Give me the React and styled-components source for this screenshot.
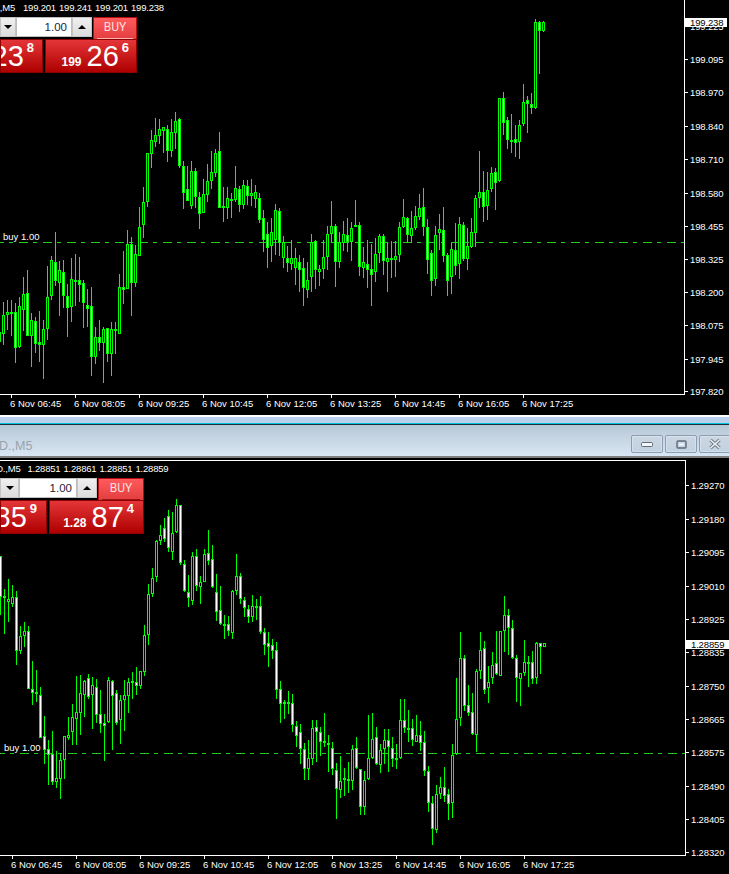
import React from 'react';
import styled, { createGlobalStyle } from 'styled-components';

const GlobalStyle = createGlobalStyle`
	html, body {
		margin: 0;
		padding: 0;
		background: #000;
	}
	#root {
		width: 729px;
		height: 874px;
		overflow: hidden;
	}
`;

const CHART_FONT = '"Liberation Sans", Arial, sans-serif';

// candles: [high, bodyTop, bodyBottom, low, filled] in page pixels, one every 4px
const usdJpyCandles = [
	[310, 332, 342, 350, 1], [302, 315, 334, 345, 0], [300, 312, 315, 330, 0], [300, 312, 314, 336, 0], [303, 312, 348, 363, 1],
	[297, 306, 347, 348, 0], [277, 294, 310, 331, 0], [270, 293, 336, 336, 1], [313, 320, 336, 367, 0], [317, 321, 344, 353, 1],
	[311, 342, 345, 362, 1], [320, 329, 345, 379, 0], [266, 297, 329, 340, 0], [256, 260, 296, 300, 0], [232, 262, 281, 286, 1],
	[261, 270, 283, 316, 0], [260, 272, 296, 308, 1], [284, 296, 308, 337, 1], [258, 279, 307, 322, 0], [254, 280, 281, 306, 0],
	[257, 280, 285, 302, 1], [280, 283, 303, 328, 1], [289, 305, 309, 327, 1], [287, 306, 357, 376, 1], [327, 337, 357, 364, 0],
	[320, 337, 343, 351, 1], [327, 329, 343, 383, 0], [328, 328, 354, 362, 1], [322, 329, 354, 376, 0], [322, 329, 331, 354, 1],
	[274, 287, 334, 334, 0], [251, 287, 290, 304, 1], [230, 244, 289, 289, 0], [237, 244, 283, 316, 1], [245, 254, 283, 287, 0],
	[207, 227, 256, 256, 0], [187, 202, 225, 238, 0], [153, 153, 202, 207, 0], [130, 140, 154, 168, 0], [118, 135, 142, 147, 0],
	[119, 129, 136, 144, 0], [127, 127, 131, 153, 0], [125, 129, 151, 162, 1], [119, 132, 151, 157, 0], [112, 121, 133, 149, 0],
	[118, 119, 166, 168, 1], [161, 166, 193, 209, 1], [166, 189, 201, 201, 1], [161, 171, 206, 209, 0], [168, 171, 197, 208, 1],
	[192, 197, 214, 229, 1], [179, 194, 213, 213, 0], [164, 181, 195, 202, 0], [151, 172, 181, 189, 0], [149, 153, 173, 177, 0],
	[132, 151, 208, 208, 1], [187, 206, 208, 222, 0], [187, 198, 208, 219, 0], [193, 199, 201, 218, 0], [166, 188, 200, 202, 0],
	[186, 189, 205, 212, 1], [180, 185, 205, 209, 0], [180, 186, 196, 205, 1], [179, 193, 196, 206, 0], [185, 192, 199, 208, 0],
	[193, 198, 220, 223, 1], [210, 218, 240, 252, 1], [222, 234, 248, 268, 1], [218, 232, 246, 262, 0], [204, 210, 240, 255, 0],
	[208, 211, 243, 256, 1], [236, 242, 258, 268, 0], [246, 258, 263, 272, 1], [240, 258, 264, 270, 0], [248, 258, 268, 285, 0],
	[255, 262, 270, 292, 1], [258, 268, 288, 306, 1], [262, 280, 290, 298, 0], [234, 242, 277, 292, 0], [240, 241, 270, 289, 1],
	[265, 269, 272, 286, 0], [240, 257, 269, 279, 0], [226, 234, 257, 270, 0], [201, 226, 234, 242, 0], [224, 226, 262, 287, 1],
	[232, 242, 262, 268, 0], [221, 234, 243, 251, 0], [218, 235, 242, 252, 1], [222, 228, 242, 261, 0], [200, 225, 226, 226, 0],
	[222, 225, 267, 276, 1], [247, 262, 268, 278, 0], [240, 264, 270, 288, 1], [244, 269, 275, 306, 1], [238, 254, 272, 282, 0],
	[234, 236, 253, 263, 0], [234, 236, 261, 275, 1], [242, 258, 262, 292, 0], [241, 258, 259, 278, 0], [241, 256, 260, 277, 0],
	[222, 227, 255, 262, 0], [199, 217, 227, 228, 0], [217, 218, 235, 243, 1], [211, 228, 236, 243, 0], [206, 216, 228, 230, 0],
	[194, 208, 217, 220, 0], [188, 207, 227, 236, 1], [219, 227, 260, 274, 1], [250, 253, 281, 296, 1], [226, 235, 279, 286, 0],
	[214, 229, 233, 250, 0], [207, 230, 256, 262, 1], [253, 255, 281, 296, 1], [243, 249, 277, 294, 0], [223, 250, 266, 275, 1],
	[217, 224, 264, 279, 0], [222, 225, 259, 261, 1], [228, 246, 259, 270, 0], [218, 232, 247, 248, 0], [195, 198, 233, 247, 0],
	[151, 192, 198, 208, 0], [171, 192, 207, 222, 1], [172, 190, 206, 220, 0], [167, 173, 189, 192, 0], [168, 172, 183, 210, 1],
	[98, 98, 181, 182, 0], [92, 98, 123, 135, 1], [117, 120, 140, 149, 1], [114, 140, 141, 153, 0], [125, 139, 143, 157, 1],
	[120, 125, 142, 159, 0], [84, 102, 124, 126, 0], [96, 100, 104, 133, 1], [93, 104, 108, 114, 1], [19, 22, 108, 109, 0],
	[21, 22, 31, 74, 1], [21, 22, 31, 32, 0],
];

const gbpUsdCandles = [
	[556, 556, 597, 615, 1], [589, 596, 597, 634, 0], [579, 599, 602, 622, 0], [585, 597, 604, 607, 0], [591, 597, 651, 665, 1],
	[626, 636, 651, 654, 0], [622, 631, 636, 647, 0], [626, 631, 689, 689, 1], [661, 689, 693, 705, 1], [670, 692, 693, 702, 0],
	[687, 695, 738, 738, 1], [716, 736, 750, 764, 1], [740, 749, 755, 785, 1], [731, 754, 782, 785, 1], [751, 778, 782, 788, 0],
	[753, 760, 779, 799, 0], [736, 736, 760, 779, 0], [717, 735, 738, 740, 0], [704, 717, 732, 745, 0], [676, 712, 719, 745, 0],
	[675, 693, 713, 735, 0], [680, 681, 695, 717, 0], [674, 678, 697, 699, 1], [677, 685, 695, 729, 0], [679, 687, 715, 723, 1],
	[690, 714, 724, 733, 1], [714, 723, 726, 761, 1], [677, 680, 722, 723, 0], [680, 681, 696, 750, 1], [690, 693, 723, 725, 1],
	[695, 700, 720, 744, 0], [680, 695, 700, 731, 0], [678, 682, 696, 713, 0], [672, 681, 683, 699, 0], [667, 682, 686, 695, 1],
	[671, 671, 686, 689, 0], [625, 635, 672, 676, 0], [584, 594, 635, 645, 0], [568, 578, 594, 597, 0], [540, 541, 577, 582, 0],
	[525, 535, 541, 545, 0], [518, 528, 539, 542, 1], [510, 516, 548, 552, 1], [512, 533, 552, 560, 0], [499, 505, 532, 533, 0],
	[505, 505, 563, 565, 1], [560, 564, 591, 592, 1], [575, 592, 598, 607, 1], [552, 556, 601, 605, 0], [549, 556, 586, 591, 1],
	[576, 582, 587, 604, 0], [549, 554, 582, 582, 0], [530, 553, 561, 565, 1], [545, 559, 587, 588, 1], [574, 592, 612, 621, 1],
	[586, 610, 624, 625, 1], [615, 624, 625, 639, 0], [616, 624, 631, 636, 1], [590, 591, 633, 639, 0], [554, 576, 591, 595, 0],
	[573, 576, 599, 604, 1], [597, 600, 608, 617, 1], [605, 609, 617, 623, 1], [595, 606, 617, 622, 0], [599, 606, 607, 620, 0],
	[596, 606, 632, 634, 1], [628, 632, 645, 655, 1], [632, 643, 647, 667, 1], [639, 645, 651, 659, 1], [642, 650, 690, 699, 1],
	[681, 689, 704, 723, 1], [700, 702, 704, 719, 0], [691, 702, 703, 714, 0], [694, 703, 725, 732, 1], [721, 726, 736, 747, 1],
	[724, 732, 749, 764, 1], [743, 749, 769, 780, 1], [740, 758, 769, 780, 0], [720, 728, 759, 765, 0], [720, 727, 732, 762, 1],
	[727, 732, 742, 756, 1], [713, 741, 743, 747, 1], [735, 743, 745, 772, 0], [742, 748, 769, 775, 1], [763, 770, 789, 819, 1],
	[756, 781, 790, 798, 0], [768, 778, 780, 796, 0], [762, 779, 781, 793, 0], [745, 749, 781, 790, 0], [737, 748, 768, 769, 1],
	[769, 769, 807, 815, 1], [771, 780, 807, 815, 0], [715, 758, 779, 780, 0], [713, 739, 758, 759, 0], [727, 737, 764, 765, 1],
	[744, 750, 765, 773, 0], [729, 740, 749, 764, 0], [729, 740, 747, 772, 1], [737, 748, 759, 767, 1], [744, 758, 760, 769, 1],
	[699, 720, 758, 759, 0], [699, 720, 728, 733, 1], [710, 728, 730, 742, 0], [719, 728, 740, 746, 1], [715, 735, 742, 742, 0],
	[721, 735, 743, 751, 1], [731, 742, 771, 776, 1], [766, 771, 803, 812, 1], [796, 803, 829, 845, 1], [785, 794, 830, 833, 0],
	[777, 787, 794, 799, 0], [767, 787, 796, 802, 1], [789, 794, 804, 820, 1], [744, 755, 803, 818, 0], [678, 719, 754, 755, 0],
	[632, 658, 718, 726, 0], [655, 658, 706, 711, 1], [685, 705, 713, 716, 1], [693, 712, 734, 735, 1], [669, 671, 735, 752, 0],
	[632, 650, 671, 679, 0], [641, 648, 690, 694, 1], [666, 682, 688, 703, 0], [652, 665, 678, 684, 0], [631, 663, 674, 675, 1],
	[631, 631, 676, 676, 0], [596, 615, 631, 652, 0], [609, 615, 628, 655, 1], [620, 628, 658, 659, 1], [655, 658, 678, 702, 1],
	[673, 673, 679, 706, 0], [640, 662, 673, 676, 0], [656, 662, 664, 687, 0], [651, 662, 679, 684, 1], [642, 643, 678, 684, 0],
	[643, 643, 647, 674, 1], [643, 643, 647, 647, 0],
];

const TIMES = ['06:45', '08:05', '09:25', '10:45', '12:05', '13:25', '14:45', '16:05', '17:25'];

const Page = styled.div`
	width: 729px;
	height: 874px;
	display: flex;
	flex-direction: column;
	background: #000;
	overflow: hidden;
`;

const ChartArea = styled.div`
	position: relative;
	flex: none;
	width: 729px;
	height: ${p => p.$height}px;
	background: #000;
	overflow: hidden;
	font-family: ${CHART_FONT};
`;

const ChartSvg = styled.svg`
	display: block;
`;

const AxisText = styled.text`
	font-family: ${CHART_FONT};
	font-size: 9.5px;
	fill: #fff;
`;

const PriceText = styled(AxisText)`
	letter-spacing: -0.15px;
`;

const LastPriceText = styled(PriceText)`
	fill: #000;
`;

/* window chrome between the two charts */
const WindowEdge = styled.div`
	flex: none;
	height: 2px;
	background: #fff;
`;

const BackWindowStrip = styled.div`
	flex: none;
	height: 6px;
	background: #b9d1ec;
`;

const ActiveLine = styled.div`
	flex: none;
	height: 1px;
	background: #00c4d8;
	border-bottom: 1px solid #1b2f38;
`;

const TitleBar = styled.div`
	flex: none;
	height: 31px;
	display: flex;
	justify-content: space-between;
	box-sizing: border-box;
	padding-top: 10px;
	background: linear-gradient(#b8c7d5, #d9e7f4);
	overflow: hidden;
`;

const TitleText = styled.div`
	margin: 4px 0 0 -1px;
	font: 12.5px/14px ${CHART_FONT};
	color: #97a3ae;
`;

const WindowButtons = styled.div`
	display: flex;
	gap: 2px;
	margin-right: -2px;
`;

const WindowButton = styled.div`
	width: 32px;
	height: 18px;
	box-sizing: border-box;
	display: flex;
	align-items: center;
	justify-content: center;
	border: 1px solid #8b9db4;
	border-radius: 2px;
	background: linear-gradient(#cbd7e2, #c3d2e1);
	box-shadow: inset 0 0 0 1px rgba(255, 255, 255, 0.3);
`;

const TitleBottom = styled.div`
	flex: none;
	height: 2px;
	background: #7f7f7f;
`;

/* OHLC line */
const ChartHeader = styled.div`
	position: absolute;
	top: ${p => p.$top}px;
	left: 0;
	display: flex;
	font-size: 9.5px;
	line-height: 11px;
	letter-spacing: -0.2px;
	color: #fff;
	white-space: nowrap;
`;

const HeaderSymbol = styled.div`
	width: ${p => p.$width}px;
	display: flex;
	justify-content: flex-end;
	box-sizing: border-box;
	padding-right: ${p => p.$pad}px;
	overflow: hidden;
`;

const HeaderValue = styled.div`
	width: 36px;
`;

/* one click trading panel */
const TradePanel = styled.div`
	position: absolute;
	top: ${p => p.$top}px;
	left: 0;
	display: flex;
	flex-direction: column;
`;

const OrderRow = styled.div`
	display: flex;
	height: 22px;
`;

const SpinButton = styled.div`
	flex: none;
	width: ${p => p.$width}px;
	height: 20px;
	box-sizing: border-box;
	display: flex;
	align-items: center;
	justify-content: center;
	background: linear-gradient(#efefef, #dcdcdc);
	border: 1px solid #c4c4c4;
	&::after {
		content: '';
		width: 0;
		height: 0;
		border-left: 4px solid transparent;
		border-right: 4px solid transparent;
		${p => (p.$up ? 'border-bottom: 4px solid #000;' : 'border-top: 4px solid #000;')}
	}
`;

const LotValue = styled.div`
	flex: none;
	width: ${p => p.$width}px;
	height: 20px;
	box-sizing: border-box;
	padding-right: 4px;
	background: #fff;
	border: 1px solid #bdbdbd;
	font: 11.5px/18px ${CHART_FONT};
	color: #1a2440;
	text-align: right;
`;

const BuyButton = styled.div`
	flex: none;
	margin-left: 1px;
	width: ${p => p.$width}px;
	height: 22px;
	box-sizing: border-box;
	padding: 0 3px;
	display: flex;
	background: linear-gradient(#ff5a5c, #e23d3f);
	border: 1px solid #b50d0f;
	border-bottom: 0;
`;

const BuyLabel = styled.div`
	flex: 1;
	text-align: center;
	font: 12px/18px Roboto, ${CHART_FONT};
	color: #ffdede;
	border-bottom: 1px solid ${p => p.$line};
`;

const PriceRow = styled.div`
	display: flex;
	gap: 2px;
	height: 34px;
`;

const PriceBox = styled.div`
	flex: none;
	width: ${p => p.$width}px;
	box-sizing: border-box;
	padding-right: ${p => p.$pad}px;
	display: flex;
	justify-content: flex-end;
	align-items: flex-start;
	background: linear-gradient(#e43638, #ae0000);
	border: 1px solid #8f0000;
	color: #fff;
	overflow: hidden;
	white-space: nowrap;
`;

const PriceHandle = styled.span`
	font: bold 12px/14px ${CHART_FONT};
	margin-top: 15px;
	margin-right: 5px;
`;

const PriceBig = styled.span`
	font: 29px/30px ${CHART_FONT};
	margin-top: 1px;
	margin-right: 3px;
`;

const PriceSup = styled.span`
	font: bold 13px/14px ${CHART_FONT};
	margin-top: 1px;
`;

const Candle = ({ x, c, bodyFill }) => {
	const [high, top, bottom, low, filled] = c;
	return (
		<g>
			<rect x={x} y={high} width={1} height={low - high} fill="#00ff00" />
			<rect x={x - 1} y={top} width={3} height={Math.max(bottom - top, 2)} fill="#00ff00" />
			{bottom - top > 2 && (
				<rect x={x} y={top + 1} width={1} height={bottom - top - 2} fill={filled ? bodyFill : '#000'} />
			)}
		</g>
	);
};

const PriceChart = ({ originY, height, firstX, candles, bodyFill, levels, last, levelY, dashOffset, plotTop, plotBottom, rightX, tickX, labelX, timeX, buyX }) => (
	<ChartSvg width={729} height={height} viewBox={`0 ${originY} 729 ${height}`} shapeRendering="crispEdges">
		{plotTop !== null && <rect x={0} y={plotTop} width={rightX + 1} height={1} fill="#fff" />}
		<rect x={rightX} y={plotTop === null ? 0 : plotTop} width={1} height={plotBottom - (plotTop === null ? 0 : plotTop)} fill="#fff" />
		<rect x={0} y={plotBottom} width={rightX + 1} height={1} fill="#fff" />
		<line x1={0} x2={rightX} y1={levelY + 0.5} y2={levelY + 0.5} stroke="#22cc22" strokeDasharray="9 5 4 6" strokeDashoffset={dashOffset} />
		<AxisText x={buyX} y={levelY - 2}>buy 1.00</AxisText>
		{candles.map((c, i) => (
			<Candle key={i} x={firstX + i * 4} c={c} bodyFill={bodyFill} />
		))}
		{levels.map(([label, y]) => (
			<g key={label}>
				<rect x={rightX + 1} y={y} width={3} height={1} fill="#fff" />
				<PriceText x={labelX} y={y + 3.5}>{label}</PriceText>
			</g>
		))}
		<rect x={rightX + 1} y={last.y - 4} width={last.right - rightX - 1} height={9} fill="#fff" />
		<LastPriceText x={labelX} y={last.y + 3.5}>{last.label}</LastPriceText>
		{TIMES.map((t, i) => (
			<g key={t}>
				<rect x={tickX + i * 64} y={plotBottom + 1} width={1} height={3} fill="#fff" />
				<AxisText x={timeX + i * 64} y={plotBottom + 13}>{`6 Nov ${t}`}</AxisText>
			</g>
		))}
	</ChartSvg>
);

const Trade = ({ top, sizes, line, sell, buy }) => (
	<TradePanel $top={top}>
		<OrderRow>
			<SpinButton $width={sizes.down} />
			<LotValue $width={sizes.input}>1.00</LotValue>
			<SpinButton $width={sizes.up} $up />
			<BuyButton $width={sizes.buy}>
				<BuyLabel $line={line}>BUY</BuyLabel>
			</BuyButton>
		</OrderRow>
		<PriceRow>
			<PriceBox $width={sizes.sell} $pad={sizes.sellPad}>
				<PriceBig>{sell[0]}</PriceBig>
				<PriceSup>{sell[1]}</PriceSup>
			</PriceBox>
			<PriceBox $width={sizes.price} $pad={sizes.pricePad}>
				<PriceHandle>{buy[0]}</PriceHandle>
				<PriceBig>{buy[1]}</PriceBig>
				<PriceSup>{buy[2]}</PriceSup>
			</PriceBox>
		</PriceRow>
	</TradePanel>
);

const Header = ({ top, symbol, width, pad, values }) => (
	<ChartHeader $top={top}>
		<HeaderSymbol $width={width} $pad={pad}>{symbol}</HeaderSymbol>
		{values.map((v, i) => (
			<HeaderValue key={i}>{v}</HeaderValue>
		))}
	</ChartHeader>
);

const MinimizeIcon = () => (
	<svg width="12" height="5" viewBox="0 0 12 5">
		<rect x="0.5" y="0.5" width="11" height="4" rx="1" fill="#f4f6f9" stroke="#5d6a78" />
	</svg>
);

const RestoreIcon = () => (
	<svg width="11" height="9" viewBox="0 0 11 9">
		<rect x="1" y="1" width="9" height="7" rx="1" fill="none" stroke="#5d6a78" strokeWidth="1.4" />
		<rect x="3" y="3.5" width="5" height="2" fill="#f4f6f9" />
	</svg>
);

const CloseIcon = () => (
	<svg width="12" height="10" viewBox="0 0 12 10">
		<path d="M1.5 1 L10.5 9 M10.5 1 L1.5 9" stroke="#6b7784" strokeWidth="3.4" />
		<path d="M1.5 1 L10.5 9 M10.5 1 L1.5 9" stroke="#eef1f4" strokeWidth="1.6" />
	</svg>
);

const App = () => (
	<Page>
		<GlobalStyle />
		<ChartArea $height={415}>
			<PriceChart
				originY={0}
				height={415}
				firstX={-1}
				candles={usdJpyCandles}
				bodyFill="#ccffcc"
				levels={[
					['199.225', 26], ['199.095', 59], ['198.970', 92], ['198.840', 126], ['198.710', 159], ['198.580', 193],
					['198.455', 226], ['198.325', 259], ['198.200', 292], ['198.075', 325], ['197.945', 359], ['197.820', 391],
				]}
				last={{ label: '199.238', y: 22, right: 727 }}
				levelY={242}
				dashOffset={5}
				plotTop={null}
				plotBottom={394}
				rightX={684}
				tickX={11}
				labelX={690}
				timeX={10}
				buyX={3}
			/>
			<Header top={2} symbol="USD,M5" width={23} pad={8} values={['199.201', '199.241', '199.201', '199.238']} />
			<Trade
				top={17}
				line="#ffb4b4"
				sizes={{ down: 16, input: 56, up: 20, buy: 44, sell: 43, price: 92, sellPad: 8, pricePad: 7 }}
				sell={['23', '8']}
				buy={['199', '26', '6']}
			/>
		</ChartArea>
		<WindowEdge />
		<BackWindowStrip />
		<ActiveLine />
		<TitleBar>
			<TitleText>D.,M5</TitleText>
			<WindowButtons>
				<WindowButton><MinimizeIcon /></WindowButton>
				<WindowButton><RestoreIcon /></WindowButton>
				<WindowButton><CloseIcon /></WindowButton>
			</WindowButtons>
		</TitleBar>
		<TitleBottom />
		<ChartArea $height={416}>
			<PriceChart
				originY={458}
				height={416}
				firstX={0}
				candles={gbpUsdCandles}
				bodyFill="#fff"
				levels={[
					['1.29270', 485], ['1.29180', 519], ['1.29095', 552], ['1.29010', 586], ['1.28925', 619], ['1.28835', 652],
					['1.28750', 686], ['1.28665', 719], ['1.28575', 752], ['1.28490', 786], ['1.28405', 819], ['1.28320', 852],
				]}
				last={{ label: '1.28859', y: 644, right: 729 }}
				levelY={753}
				dashOffset={4}
				plotTop={460}
				plotBottom={855}
				rightX={685}
				tickX={12}
				labelX={691}
				timeX={11}
				buyX={4}
			/>
			<Header top={5} symbol="D.,M5" width={27.5} pad={7} values={['1.28851', '1.28861', '1.28851', '1.28859']} />
			<Trade
				top={20}
				line="#9c1012"
				sizes={{ down: 19, input: 58, up: 20, buy: 46, sell: 47, price: 95, sellPad: 9, pricePad: 9 }}
				sell={['85', '9']}
				buy={['1.28', '87', '4']}
			/>
		</ChartArea>
	</Page>
);

export default App;
